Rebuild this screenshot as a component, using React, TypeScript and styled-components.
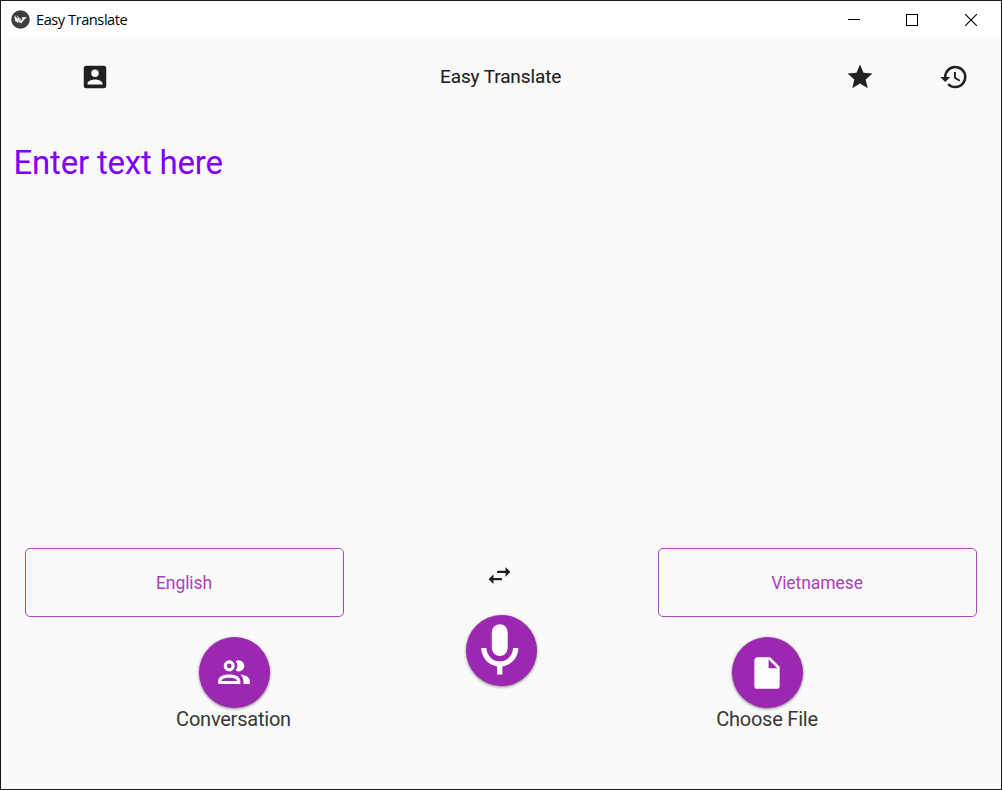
import React from "react";
import styled, { createGlobalStyle } from "styled-components";

const GlobalStyle = createGlobalStyle`
  * { box-sizing: border-box; }
  body { margin: 0; background: #fafafa; font-family: Roboto, "Liberation Sans", sans-serif; }
`;

const paths = {
  accountBox:
    "M6,17C6,15 10,13.9 12,13.9C14,13.9 18,15 18,17V18H6M15,9A3,3 0 0,1 12,12A3,3 0 0,1 9,9A3,3 0 0,1 12,6A3,3 0 0,1 15,9M3,5V19A2,2 0 0,0 5,21H19A2,2 0 0,0 21,19V5A2,2 0 0,0 19,3H5C3.89,3 3,3.9 3,5Z",
  star: "M12,17.27L18.18,21L16.54,13.97L22,9.24L14.81,8.62L12,2L9.19,8.62L2,9.24L7.45,13.97L5.82,21L12,17.27Z",
  history:
    "M13.5,8H12V13L16.28,15.54L17,14.33L13.5,12.25V8M13,3A9,9 0 0,0 4,12H1L4.96,16.03L9,12H6A7,7 0 0,1 13,5A7,7 0 0,1 20,12A7,7 0 0,1 13,19C11.07,19 9.32,18.21 8.06,16.94L6.64,18.36C8.27,20 10.5,21 13,21A9,9 0 0,0 22,12A9,9 0 0,0 13,3",
  swap: "M21,9L17,5V8H10V10H17V13M7,11L3,15L7,19V16H14V14H7V11Z",
  microphone:
    "M12,2A3,3 0 0,1 15,5V11A3,3 0 0,1 12,14A3,3 0 0,1 9,11V5A3,3 0 0,1 12,2M19,11C19,14.53 16.39,17.44 13,17.93V21H11V17.93C7.61,17.44 5,14.53 5,11H7A5,5 0 0,0 12,16A5,5 0 0,0 17,11H19Z",
  people:
    "M13.07 10.41A5 5 0 0 0 13.07 4.59A3.39 3.39 0 0 1 15 4A3.5 3.5 0 0 1 15 11A3.39 3.39 0 0 1 13.07 10.41M5.5 7.5A3.5 3.5 0 1 1 9 11A3.5 3.5 0 0 1 5.5 7.5M7.5 7.5A1.5 1.5 0 1 0 9 6A1.5 1.5 0 0 0 7.5 7.5M16 17V19H2V17S2 13 9 13 16 17 16 17M14 17C13.86 16.22 12.67 15 9 15S4.07 16.31 4 17M15.95 13A5.32 5.32 0 0 1 18 17V19H22V17S22 13.37 15.94 13Z",
  file: "M13,9V3.5L18.5,9M6,2C4.89,2 4,2.89 4,4V20A2,2 0 0,0 6,22H18A2,2 0 0,0 20,20V8L14,2H6Z",
};

const Svg = styled.svg`
  display: block;
  flex: none;
  fill: currentColor;
`;

function Icon({ name, size }: { name: keyof typeof paths; size: number }) {
  return (
    <Svg width={size} height={size} viewBox="0 0 24 24">
      <path fillRule="evenodd" d={paths[name]} />
    </Svg>
  );
}

const Window = styled.div`
  display: flex;
  flex-direction: column;
  width: 1002px;
  height: 790px;
  border: 1px solid #1b191c;
  background: #fafafa;
  overflow: hidden;
`;

const TitleBar = styled.header`
  display: flex;
  align-items: center;
  height: 38px;
  flex: none;
  padding: 0 1px 1px 10.4px;
  background: #fff;
`;

const WindowTitle = styled.span`
  flex: 1;
  margin-left: 5.6px;
  padding-bottom: 2px;
  font: 14.6px/20px "Open Sans", "Noto Sans", sans-serif;
  letter-spacing: -0.44px;
  color: #000;
`;

const WindowButton = styled.button`
  display: flex;
  align-items: center;
  justify-content: center;
  width: 58.5px;
  height: 38px;
  padding: 1px 0 0;
  border: 0;
  background: none;
  color: #000;
`;

const Toolbar = styled.nav`
  display: flex;
  align-items: center;
  height: 75px;
  flex: none;
  padding: 0 32.5px 0 78.5px;
`;

const ToolButton = styled.button`
  display: flex;
  padding: 0;
  border: 0;
  background: none;
  color: #212121;
`;

const ToolGroup = styled.div`
  display: flex;
  gap: 64px;
`;

const AppTitle = styled.h1`
  flex: 1;
  margin: 0 0 0 330.5px;
  font-size: 19px;
  font-weight: 400;
  line-height: 24px;
  letter-spacing: -0.12px;
  color: #212121;
  -webkit-text-stroke: 0.1px #212121;
`;

const Input = styled.textarea`
  flex: 1;
  min-height: 0;
  padding: 30px 12.5px;
  border: 0;
  outline: 0;
  resize: none;
  background: transparent;
  font: 33px/38px Roboto, sans-serif;
  letter-spacing: -0.2px;
  color: #7f00ff;
  &::placeholder { color: #7f00ff; opacity: 1; }
`;

const Controls = styled.main`
  display: grid;
  grid-template-columns: 319px 1fr 319px;
  height: 241px;
  flex: none;
  padding: 0 24px;
`;

const Side = styled.section<{ $end?: boolean }>`
  display: flex;
  flex-direction: column;
  gap: 20px;
  align-items: ${(p) => (p.$end ? "flex-start" : "flex-end")};
`;

const Center = styled.section`
  display: flex;
  flex-direction: column;
  align-items: center;
  gap: 25px;
  padding-top: 13px;
`;

const SwapButton = styled(ToolButton)`
  margin-right: 3px;
`;

const LanguageButton = styled.button`
  appearance: none;
  width: 319px;
  height: 69px;
  padding: 0 1px 0 0;
  border: 1px solid #ab47bc;
  border-radius: 5px;
  background: none;
  font: 17.5px/22px Roboto, sans-serif;
  letter-spacing: -0.08px;
  color: #ab3fbd;
`;

const Action = styled.div<{ $end?: boolean }>`
  display: flex;
  flex-direction: column;
  align-items: center;
  width: ${(p) => (p.$end ? 219 : 220)}px;
`;

const RoundButton = styled.button<{ $lowered?: boolean }>`
  display: flex;
  align-items: center;
  justify-content: center;
  width: 71px;
  height: 71px;
  flex: none;
  padding: ${(p) => (p.$lowered ? "1px 2px 0 0" : "1px 1px 0 0")};
  border: 0;
  border-radius: 50%;
  background: #9c27b0;
  color: #fff;
  box-shadow: 0 1px 3px rgba(0, 0, 0, 0.5);
`;

const Label = styled.span`
  margin-right: 1px;
  font-size: 20px;
  line-height: 23px;
  letter-spacing: -0.22px;
  color: #373737;
`;

function Logo() {
  return (
    <Svg width="19" height="19" viewBox="0 0 19 19">
      <circle cx="9.5" cy="9.5" r="9.3" fill="#3c3f42" />
      <path d="M3.3 5.2L7.2 9.4V13L4.2 11Z" fill="#fff" />
      <path d="M6 5.4L11 10.2L9.2 13.2L7.4 12Z" fill="#d8d8d8" />
      <path d="M10.7 7.3H16L13.8 9L10.3 13.4L9.4 12.6L11.4 9.8Z" fill="#fff" />
    </Svg>
  );
}

export default function App() {
  return (
    <>
      <GlobalStyle />
      <Window>
        <TitleBar>
          <Logo />
          <WindowTitle>Easy Translate</WindowTitle>
          <WindowButton aria-label="Minimize">
            <Svg width="12" height="12" shapeRendering="crispEdges"><path d="M0 5h12v1H0z" /></Svg>
          </WindowButton>
          <WindowButton aria-label="Maximize">
            <Svg width="12" height="12" shapeRendering="crispEdges"><path fillRule="evenodd" d="M0 0h12v12H0zM1 1v10h10V1z" /></Svg>
          </WindowButton>
          <WindowButton aria-label="Close">
            <Svg width="12" height="12"><path d="M0 0L12 12M12 0L0 12" stroke="#000" strokeWidth="1.1" /></Svg>
          </WindowButton>
        </TitleBar>
        <Toolbar>
          <ToolButton aria-label="Account"><Icon name="accountBox" size={30} /></ToolButton>
          <AppTitle>Easy Translate</AppTitle>
          <ToolGroup>
            <ToolButton aria-label="Favourites"><Icon name="star" size={30} /></ToolButton>
            <ToolButton aria-label="History"><Icon name="history" size={30} /></ToolButton>
          </ToolGroup>
        </Toolbar>
        <Input placeholder="Enter text here" spellCheck={false} />
        <Controls>
          <Side>
            <LanguageButton>English</LanguageButton>
            <Action>
              <RoundButton aria-label="Conversation"><Icon name="people" size={38} /></RoundButton>
              <Label>Conversation</Label>
            </Action>
          </Side>
          <Center>
            <SwapButton aria-label="Swap languages"><Icon name="swap" size={29} /></SwapButton>
            <RoundButton $lowered aria-label="Speak"><Icon name="microphone" size={63.5} /></RoundButton>
          </Center>
          <Side $end>
            <LanguageButton>Vietnamese</LanguageButton>
            <Action $end>
              <RoundButton aria-label="Choose file"><Icon name="file" size={38} /></RoundButton>
              <Label>Choose File</Label>
            </Action>
          </Side>
        </Controls>
      </Window>
    </>
  );
}
